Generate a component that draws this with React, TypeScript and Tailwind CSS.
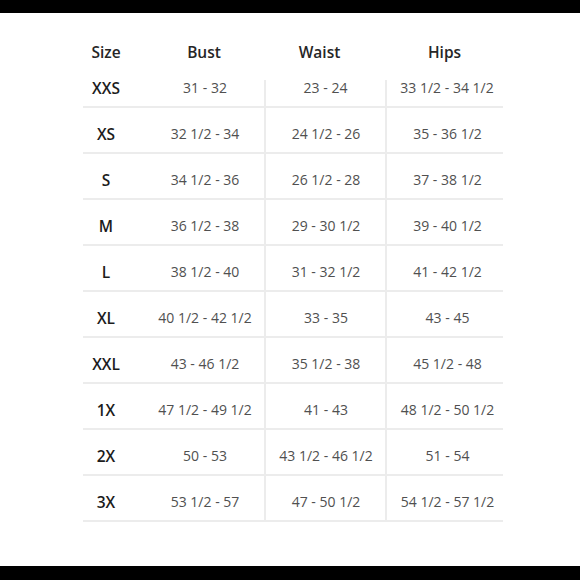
import React from "react";

const rows: [string, string, string, string][] = [
  ["XXS", "31 - 32", "23 - 24", "33 1/2 - 34 1/2"],
  ["XS", "32 1/2 - 34", "24 1/2 - 26", "35 - 36 1/2"],
  ["S", "34 1/2 - 36", "26 1/2 - 28", "37 - 38 1/2"],
  ["M", "36 1/2 - 38", "29 - 30 1/2", "39 - 40 1/2"],
  ["L", "38 1/2 - 40", "31 - 32 1/2", "41 - 42 1/2"],
  ["XL", "40 1/2 - 42 1/2", "33 - 35", "43 - 45"],
  ["XXL", "43 - 46 1/2", "35 1/2 - 38", "45 1/2 - 48"],
  ["1X", "47 1/2 - 49 1/2", "41 - 43", "48 1/2 - 50 1/2"],
  ["2X", "50 - 53", "43 1/2 - 46 1/2", "51 - 54"],
  ["3X", "53 1/2 - 57", "47 - 50 1/2", "54 1/2 - 57 1/2"],
];

const val = "pt-[16px] text-center text-[14px] leading-[20px] text-[#505050]";
const firstLine =
  "relative before:content-[''] before:absolute before:left-[-1px] before:top-[18px] before:bottom-0 before:w-[2px] before:bg-[#ececec]";
const line = "border-l-2 border-[#ececec] -ml-[1px]";

export default function App() {
  return (
    <div
      className="w-[580px] h-[580px] flex flex-col bg-black"
      style={{ fontFamily: '"Open Sans", "Liberation Sans", sans-serif' }}
    >
      <div className="h-[13px] bg-black" />
      <div className="flex-1 bg-white pt-[29px] pl-[83px]">
        <div className="w-[420px]">
          <div className="grid grid-cols-[46px_136px_121px_117px] h-[20px] text-[15.5px] leading-[20px] font-semibold text-[#262626]">
            <div className="text-center">Size</div>
            <div className="text-center pl-[14px]">Bust</div>
            <div className="text-center pr-[12px]">Waist</div>
            <div className="text-center">Hips</div>
          </div>
          {rows.map((r, i) => (
            <div
              key={r[0]}
              className="grid grid-cols-[46px_136px_121px_117px] h-[46px] border-b-2 border-[#ececec]"
            >
              <div className="pt-[16px] text-center text-[15.5px] leading-[20px] font-semibold text-[#1c1c1c]">
                {r[0]}
              </div>
              <div className={`${val} pl-[16px]`}>{r[1]}</div>
              <div className={`${val} ${i === 0 ? firstLine : line}`}>{r[2]}</div>
              <div className={`${val} pl-[5px] ${i === 0 ? firstLine : line}`}>{r[3]}</div>
            </div>
          ))}
        </div>
      </div>
      <div className="h-[14px] bg-black" />
    </div>
  );
}
